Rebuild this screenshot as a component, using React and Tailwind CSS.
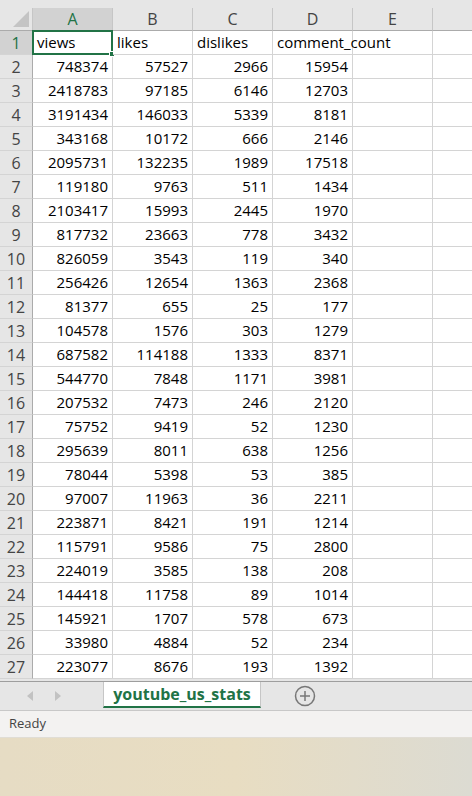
import React from "react";

const rows = [
  [748374, 57527, 2966, 15954],
  [2418783, 97185, 6146, 12703],
  [3191434, 146033, 5339, 8181],
  [343168, 10172, 666, 2146],
  [2095731, 132235, 1989, 17518],
  [119180, 9763, 511, 1434],
  [2103417, 15993, 2445, 1970],
  [817732, 23663, 778, 3432],
  [826059, 3543, 119, 340],
  [256426, 12654, 1363, 2368],
  [81377, 655, 25, 177],
  [104578, 1576, 303, 1279],
  [687582, 114188, 1333, 8371],
  [544770, 7848, 1171, 3981],
  [207532, 7473, 246, 2120],
  [75752, 9419, 52, 1230],
  [295639, 8011, 638, 1256],
  [78044, 5398, 53, 385],
  [97007, 11963, 36, 2211],
  [223871, 8421, 191, 1214],
  [115791, 9586, 75, 2800],
  [224019, 3585, 138, 208],
  [144418, 11758, 89, 1014],
  [145921, 1707, 578, 673],
  [33980, 4884, 52, 234],
  [223077, 8676, 193, 1392],
];

const headers = ["views", "likes", "dislikes", "comment_count"];
const cols = ["A", "B", "C", "D", "E", "F"];

const RowHead = ({ n, active }) => (
  <div
    className={`h-[24px] flex items-center justify-center border-r border-r-[#ababab] border-b border-b-[#d4d4d4] text-[16px] ${
      active ? "bg-[#d2d2d2] text-[#217346]" : "bg-[#e6e6e6] text-[#444]"
    }`}
  >
    {n}
  </div>
);

const Cell = ({ children, right }) => (
  <div
    className={`h-[24px] flex items-center px-[4px] border-r border-b border-[#d4d4d4] bg-white text-[15px] text-black whitespace-nowrap overflow-visible ${
      right ? "justify-end" : "justify-start"
    }`}
  >
    {children}
  </div>
);

export default function App() {
  return (
    <div
      className="w-[472px] h-[796px] flex flex-col overflow-hidden bg-white"
      style={{ fontFamily: "'Open Sans', 'Noto Sans', sans-serif" }}
    >
      {/* Sheet grid */}
      <div className="flex-1 overflow-hidden bg-[#e6e6e6] pt-[8px]">
        <div className="grid w-[521px] grid-cols-[33px_80px_80px_80px_80px_80px_88px]">
          {/* Corner */}
          <div className="h-[23px] bg-[#e6e6e6] border-r border-[#c6c6c6] border-b border-b-[#ababab] flex items-end justify-end pr-[3px] pb-[3px]">
            <svg width="16" height="16" viewBox="0 0 16 16">
              <polygon points="16,0 16,16 0,16" fill="#c4c4c4" />
            </svg>
          </div>
          {cols.map((c, i) => (
            <div
              key={c}
              className={`h-[23px] flex items-center justify-center border-r border-r-[#c6c6c6] border-b border-b-[#ababab] text-[16px] ${
                i === 0 ? "bg-[#d2d2d2] text-[#217346]" : "bg-[#e6e6e6] text-[#444]"
              }`}
            >
              {c}
            </div>
          ))}

          {/* Row 1: titles */}
          <RowHead n={1} active />
          {headers.map((h, i) => (
            <div key={h} className="relative z-[1]">
              <Cell>{h}</Cell>
              {i === 0 && (
                <div className="absolute -left-px -top-px w-[81px] h-[25px] border-2 border-[#217346]">
                  <div className="absolute -right-[4px] -bottom-[4px] w-[6px] h-[6px] bg-[#217346] border border-white" />
                </div>
              )}
            </div>
          ))}
          <Cell />
          <Cell />

          {rows.map((r, idx) => (
            <React.Fragment key={idx}>
              <RowHead n={idx + 2} />
              {r.map((v, j) => (
                <Cell key={j} right>
                  {v}
                </Cell>
              ))}
              <Cell />
              <Cell />
            </React.Fragment>
          ))}
        </div>
      </div>

      {/* Sheet tabs */}
      <div className="h-[30px] shrink-0 flex items-start bg-[#e6e6e6] border-t border-[#9e9e9e] border-b border-b-[#c8c8c8]">
        <div className="w-[103px] h-[28px] flex items-center pl-[27px] gap-[22px]">
          <svg width="6" height="10" viewBox="0 0 6 10">
            <polygon points="6,0 6,10 0,5" fill="#c2c2c2" />
          </svg>
          <svg width="6" height="10" viewBox="0 0 6 10">
            <polygon points="0,0 0,10 6,5" fill="#c2c2c2" />
          </svg>
        </div>
        <div className="w-[158px] h-[26px] flex items-center justify-center bg-white border-x border-[#c6c6c6] border-b-2 border-b-[#217346] text-[16px] font-bold text-[#217346]">
          youtube_us_stats
        </div>
        <div className="flex-1 h-[28px] flex items-center pl-[33px]">
          <svg width="22" height="22" viewBox="0 0 22 22" fill="none" stroke="#777" strokeWidth="1.5">
            <circle cx="11" cy="11" r="9.5" />
            <line x1="11" y1="6" x2="11" y2="16" />
            <line x1="6" y1="11" x2="16" y2="11" />
          </svg>
        </div>
      </div>

      {/* Status bar */}
      <div className="h-[27px] shrink-0 flex items-center px-[9px] bg-[#f3f2f1] border-b border-[#e0ddd5] text-[13px] text-[#444]">
        Ready
      </div>

      {/* Desktop behind */}
      <div className="h-[58px] shrink-0 bg-gradient-to-r from-[#e6dcc4] via-[#e8ddc2] to-[#dcdbd2]" />
    </div>
  );
}
